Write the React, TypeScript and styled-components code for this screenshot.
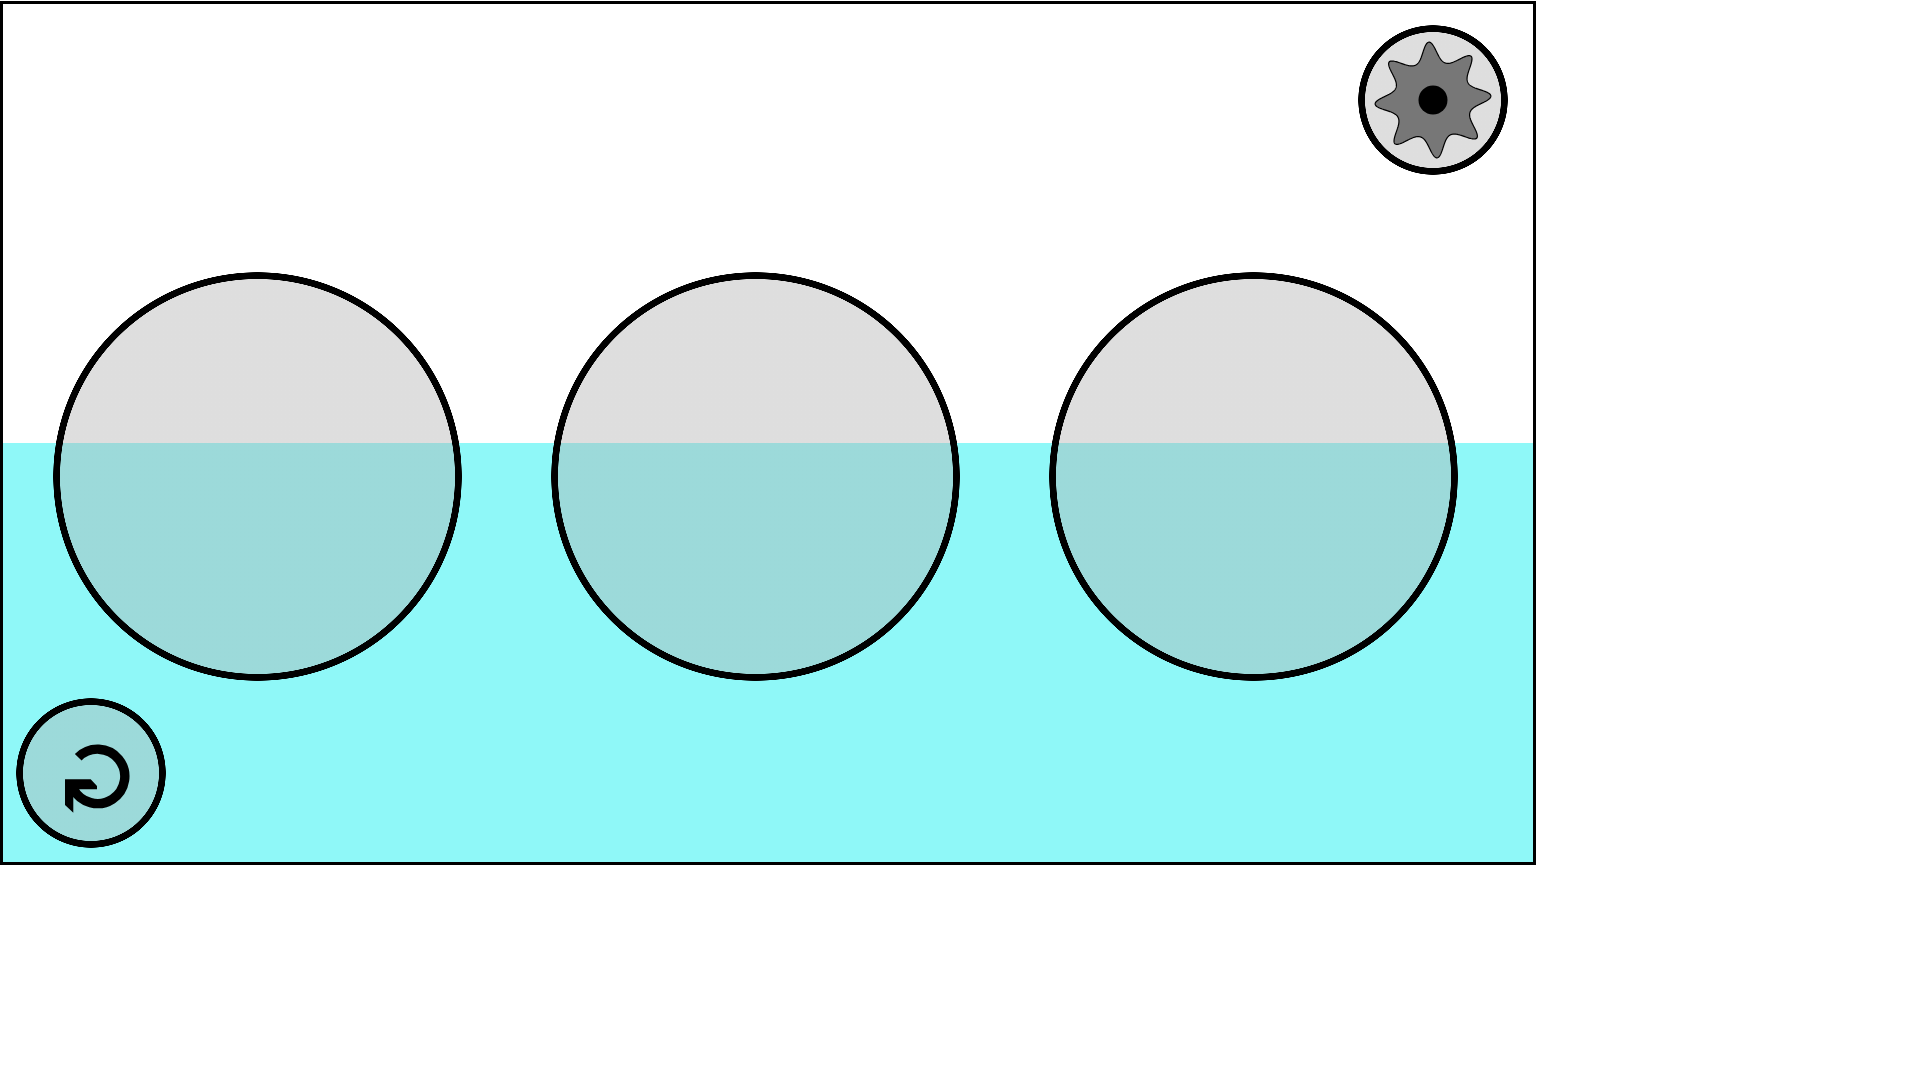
import React, { FC } from "react";
import styled, { createGlobalStyle } from "styled-components";

const GlobalStyle = createGlobalStyle`
	html, body {
		margin: 0;
		padding: 0;
		background: #ffffff;
	}
`;

const Board = styled.div`
	position: relative;
	box-sizing: border-box;
	width: 1536px;
	height: 864px;
	margin-top: 1px;
	border: 3px solid #000;
	overflow: hidden;
	display: flex;
	flex-direction: column;
`;

// the water lies behind the translucent discs
const Water = styled.div`
	position: absolute;
	left: 0;
	right: 0;
	bottom: 0;
	height: 419px;
	background: #8ff8f8;
`;

const Layer = styled.div`
	position: relative;
	display: flex;
	justify-content: ${(props: { $end?: boolean }) =>
		props.$end ? "flex-end" : "flex-start"};
`;

const TopBar = styled(Layer)`
	padding: 21px 25px 0 0;
`;

const DiscRow = styled(Layer)`
	gap: 89px;
	margin-top: 97px;
	padding-left: 50px;
`;

const BottomBar = styled(Layer)`
	margin-top: 17px;
	padding-left: 13px;
`;

// ring painted as a gradient so it stays truly round
const ringBackground = (ring: number) => `
	background: radial-gradient(
		closest-side,
		rgba(175, 175, 175, 0.41) calc(100% - ${ring + 0.5}px),
		#000 calc(100% - ${ring}px),
		#000 calc(100% - 0.5px),
		transparent 100%
	);
`;

const Disc = styled.div`
	width: 409px;
	height: 409px;
	${ringBackground(6.8)}
`;

const RoundButton = styled.div`
	width: 150px;
	height: 150px;
	${ringBackground(6.8)}
	display: flex;
	align-items: center;
	justify-content: center;
	cursor: pointer;
`;

// eight narrow teeth with round valleys, tips about 58px from the hub
const gearPath = () => {
	const points: string[] = [];
	for (let i = 0; i < 720; i++) {
		const a = (i * Math.PI) / 360;
		const u = (1 - Math.cos(8 * a)) / 2;
		const r = 39 + (19 * (1 - u)) / (1 + 1.5 * u);
		const t = a - Math.PI / 2 - (4 * Math.PI) / 180;
		points.push(`${(r * Math.cos(t)).toFixed(2)} ${(r * Math.sin(t)).toFixed(2)}`);
	}
	return `M${points.join("L")}Z`;
};

const GearIcon: FC = () => (
	<svg width="138" height="138" viewBox="-69 -69 138 138">
		<path d={gearPath()} fill="#777" stroke="#000" strokeWidth="1.2" />
		<circle r="14.5" fill="#000" />
	</svg>
);

const ResetIcon: FC = () => (
	<svg width="138" height="138" viewBox="22 704 138 138">
		<path
			d="M78.2 757.3A27.2 27.2 0 1 1 73.3 788.6"
			fill="none"
			stroke="#000"
			strokeWidth="9.4"
		/>
		<path d="M65 779.3H90.7L97 786V789.3H78.3L73.3 795V812.7L65 805Z" fill="#000" />
	</svg>
);

const App: FC = () => (
	<>
		<GlobalStyle />
		<Board>
			<Water />
			<TopBar $end>
				<RoundButton aria-label="Settings">
					<GearIcon />
				</RoundButton>
			</TopBar>
			<DiscRow>
				<Disc />
				<Disc />
				<Disc />
			</DiscRow>
			<BottomBar>
				<RoundButton aria-label="Reset">
					<ResetIcon />
				</RoundButton>
			</BottomBar>
		</Board>
	</>
);

export default App;
